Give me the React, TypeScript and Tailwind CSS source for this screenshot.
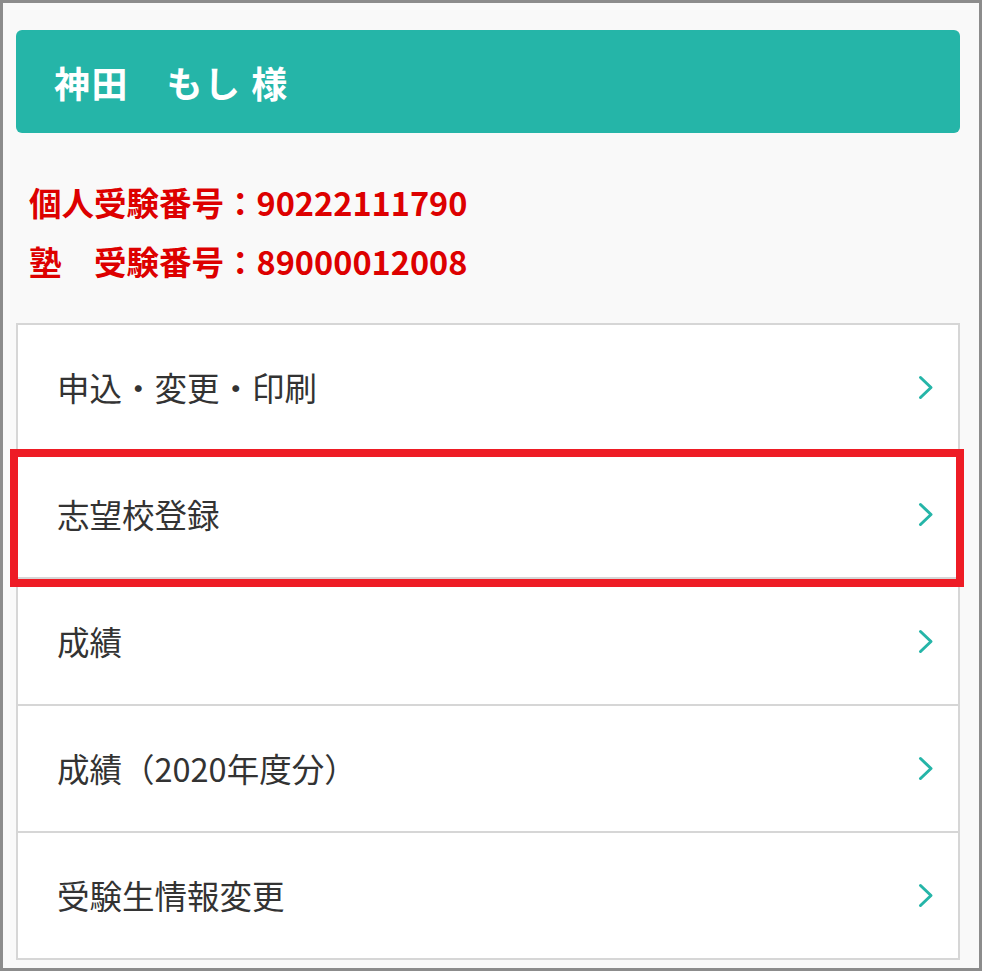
import React from 'react';

const MENU_ITEMS = [
    '申込・変更・印刷',
    '志望校登録',
    '成績',
    '成績（2020年度分）',
    '受験生情報変更',
];

const HIGHLIGHT_INDEX = 1;

const Chevron: React.FC = () => (
    <svg width="16" height="26" viewBox="0 0 16 26" className="shrink-0">
        <polyline
            points="2.5,2.5 13,12.5 2.5,22.5"
            fill="none"
            stroke="#25b5a8"
            strokeWidth="3"
            strokeLinecap="round"
            strokeLinejoin="round"
        />
    </svg>
);

export default function App() {
    return (
        <div
            className="w-[982px] h-[971px] border-[3px] border-[#8c8c8c] bg-[#f9f9f9] pl-[13px] pr-[19px] pt-[27px] overflow-hidden"
            style={{ fontFamily: '"Noto Sans CJK JP", "Noto Sans", sans-serif' }}
        >
            {/* name header */}
            <div className="h-[103px] rounded-[6px] bg-[#25b5a8] flex items-center pl-[38px]">
                <h1 className="text-white text-[36px] font-bold leading-none tracking-[1.5px]">神田　もし 様</h1>
            </div>

            {/* exam numbers */}
            <div className="mt-[39px] pl-[13px] text-[#dd0000] text-[32.5px] font-bold leading-[59px]">
                <p>個人受験番号：90222111790</p>
                <p>塾　受験番号：89000012008</p>
            </div>

            {/* menu */}
            <ul className="mt-[33px] border-2 border-[#d6d6d6] bg-white divide-y-2 divide-[#d6d6d6]">
                {MENU_ITEMS.map((label, i) => (
                    <li
                        key={label}
                        className="relative box-content h-[125px] flex items-center justify-between pl-[39px] pr-[24px]"
                    >
                        <span className="text-[#333333] text-[32.5px]">{label}</span>
                        <Chevron />
                        {i === HIGHLIGHT_INDEX && (
                            <div className="absolute left-[-8px] right-[-6px] top-[-3px] bottom-[-10px] border-[8px] border-[#ee1c25] z-10 pointer-events-none" />
                        )}
                    </li>
                ))}
            </ul>
        </div>
    );
}
